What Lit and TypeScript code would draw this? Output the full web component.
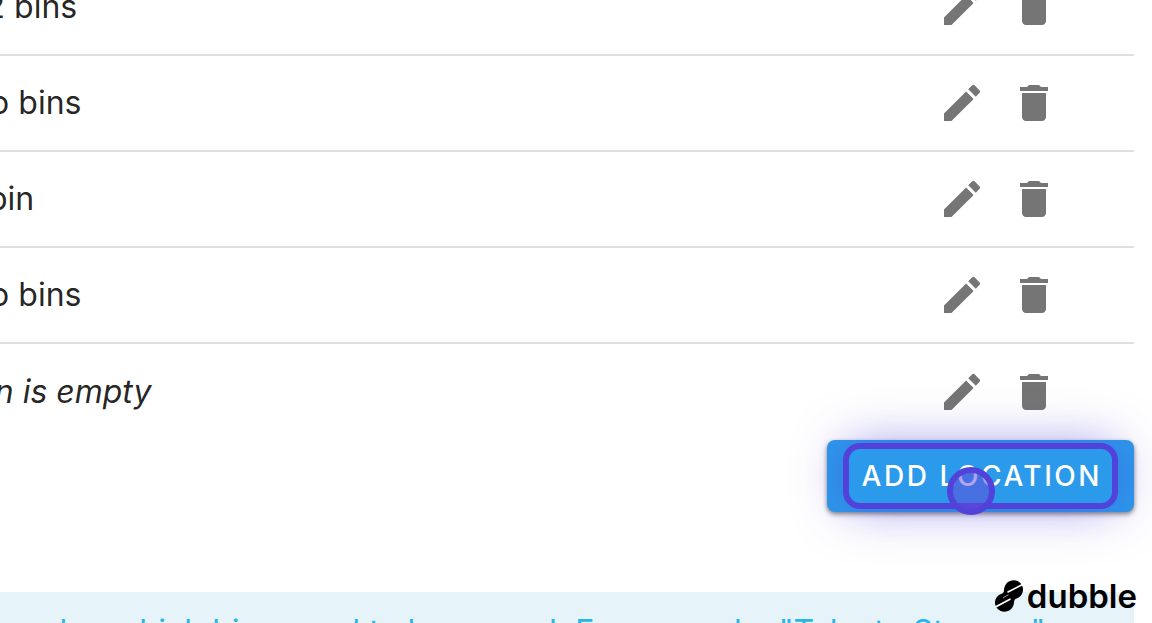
import { LitElement, html, css } from "lit";
import { customElement, state } from "lit/decorators.js";

interface Row {
  text: string;
  empty?: boolean;
}

@customElement("app-root")
export class AppRoot extends LitElement {
  static styles = css`
    :host {
      display: block;
      position: relative;
      height: 100vh;
      overflow: hidden;
      background: #fff;
      color: rgba(0, 0, 0, 0.87);
      font-family: Inter, "Liberation Sans", sans-serif;
      font-size: 32px;
    }
    main {
      margin: -40px 18px 0 -66px;
    }
    table {
      width: 100%;
      border-collapse: separate;
      border-spacing: 0;
    }
    td {
      box-sizing: border-box;
      height: 96px;
      padding: 0 32px;
      border-bottom: 2px solid #e0e0e0;
      line-height: 48px;
      text-align: left;
    }
    tr:last-child td {
      border-bottom: 0;
    }
    .actions {
      width: 272px;
      padding: 0 76px;
    }
    .icons {
      display: flex;
      justify-content: flex-end;
      gap: 24px;
    }
    .icon {
      display: block;
      width: 48px;
      height: 48px;
      padding: 0;
      border: 0;
      background: none;
      color: #757575;
    }
    svg {
      display: block;
      width: 100%;
      height: 100%;
      fill: currentColor;
    }
    .bar {
      display: flex;
      justify-content: flex-end;
    }
    .add {
      position: relative;
      height: 72px;
      padding: 0 32px 0 35px;
      border: 0;
      border-radius: 8px;
      background: #2b9aeb;
      color: #fff;
      font: 500 28px/48px Inter, "Liberation Sans", sans-serif;
      letter-spacing: 0.09em;
      text-transform: uppercase;
      box-shadow: 0 2px 4px rgba(0, 0, 0, 0.4), 0 3px 6px rgba(0, 0, 0, 0.12);
    }
    .ring {
      position: absolute;
      inset: 3px 16px;
      border: 6px solid #5143d9;
      border-radius: 17px;
      box-shadow: 0 0 48px rgba(81, 67, 217, 0.5);
    }
    .dot {
      position: absolute;
      left: 120px;
      top: 27px;
      box-sizing: border-box;
      width: 48px;
      height: 48px;
      border: 6px solid #5143d9;
      border-radius: 50%;
      background: rgba(100, 72, 217, 0.5);
    }
    .note {
      margin-top: 80px;
      padding: 16px 28px;
      background: #e6f4fa;
      color: #29b6e8;
      line-height: 48px;
      white-space: nowrap;
    }
    .brand {
      position: absolute;
      right: 15px;
      bottom: 8px;
      display: flex;
      align-items: center;
      gap: 4px;
      color: #000;
      font-size: 33px;
      font-weight: 600;
      line-height: 38px;
    }
    .mark {
      width: 28px;
      height: 32px;
    }
  `;

  @state() private rows: Row[] = [
    { text: "22 bins" },
    { text: "No bins" },
    { text: "1 bin" },
    { text: "No bins" },
    { text: "Bin is empty", empty: true },
  ];

  render() {
    return html`
      <main>
        <table>
          <tbody>
            ${this.rows.map(
              (row) => html`<tr>
                <td>${row.empty ? html`<em>${row.text}</em>` : row.text}</td>
                <td class="actions">
                  <div class="icons">
                    <button class="icon" aria-label="Edit">
                      <svg viewBox="0 0 24 24"><path d="M3 17.25V21h3.75L17.81 9.94l-3.75-3.75L3 17.25zM20.71 7.04c.39-.39.39-1.02 0-1.41l-2.34-2.34a.996.996 0 0 0-1.41 0l-1.83 1.83 3.75 3.75 1.83-1.83z"/></svg>
                    </button>
                    <button class="icon" aria-label="Delete">
                      <svg viewBox="0 0 24 24"><path d="M6 19c0 1.100.9 2 2 2h8c1.100 0 2-.9 2-2V7H6v12zM19 4h-3.500l-1-1h-5l-1 1H5v2h14V4z"/></svg>
                    </button>
                  </div>
                </td>
              </tr>`
            )}
          </tbody>
        </table>
        <div class="bar">
          <button class="add">
            Add location<span class="ring"></span><span class="dot"></span>
          </button>
        </div>
        <div class="note">
          Now plan which bins need to be moved. For example, "Take to Storage"
        </div>
      </main>
      <div class="brand">
        <svg class="mark" viewBox="0 0 28 32">
          <path d="M9 10C9.500 4 13.500 .3 18.700 .3C24 .3 28 4.500 28 9.500C28 13.500 25.500 17 22 18.200C19.500 19 19.200 20 19 22.500C18.600 28 14.500 31.700 9.400 31.700C4.200 31.700 0 27.800 0 22.600C0 18.500 2.500 15.200 6.200 13.900C8.500 13 8.800 12.300 9 10Z"/>
          <path d="M12.500 12.200L28.500 4M-.5 27.500L15.500 19" fill="none" stroke="#fff" stroke-width="1.600"/>
          <path d="M8 17.600L13.500 14.800" fill="none" stroke="#fff" stroke-width=".6"/>
        </svg>
        <span>dubble</span>
      </div>
    `;
  }
}
